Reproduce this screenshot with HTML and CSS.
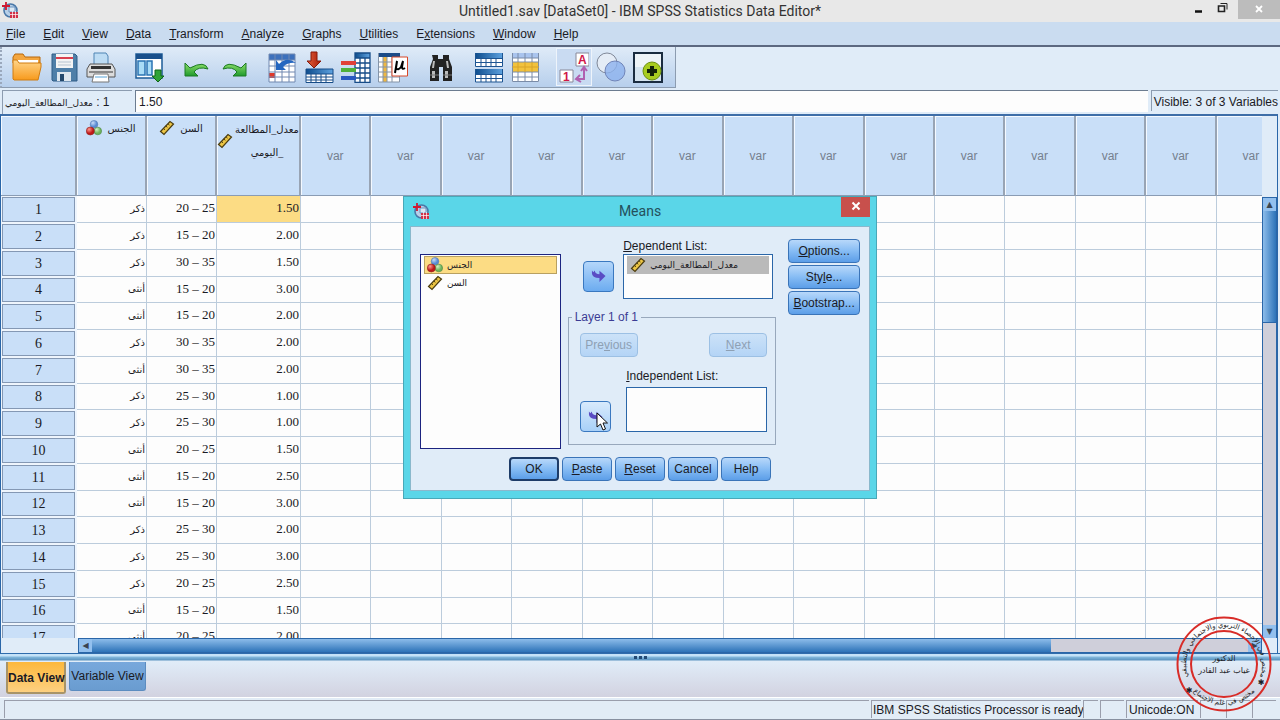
FILE: index.html
```html
<!DOCTYPE html>
<html lang="en">
<head>
    <meta charset="UTF-8">
    <meta name="viewport" content="width=device-width, initial-scale=1.0">
    <title>Untitled1.sav [DataSet0] - IBM SPSS Statistics Data Editor*</title>
    <link rel="stylesheet" href="styles.css">
</head>
<body>
    <!-- shared icons -->
    <svg class="defs" width="0" height="0" aria-hidden="true">
        <defs>
            <linearGradient id="gOrange" x1="0" y1="0" x2="0" y2="1"><stop offset="0" stop-color="#ffd58a"/><stop offset="1" stop-color="#f79a1c"/></linearGradient>
            <linearGradient id="gBlue" x1="0" y1="0" x2="1" y2="0"><stop offset="0" stop-color="#0d4c8c"/><stop offset="1" stop-color="#5fa3e0"/></linearGradient>
            <linearGradient id="gGreen" x1="0" y1="0" x2="0" y2="1"><stop offset="0" stop-color="#8fe06a"/><stop offset="1" stop-color="#1f9a2c"/></linearGradient>
            <linearGradient id="gRed" x1="0" y1="0" x2="1" y2="0"><stop offset="0" stop-color="#e2603c"/><stop offset="1" stop-color="#a81c08"/></linearGradient>
            <radialGradient id="gBallR" cx=".35" cy=".3"><stop offset="0" stop-color="#ff9a90"/><stop offset="1" stop-color="#c01818"/></radialGradient>
            <radialGradient id="gBallG" cx=".35" cy=".3"><stop offset="0" stop-color="#d4f0c4"/><stop offset="1" stop-color="#6fb45c"/></radialGradient>
            <radialGradient id="gBallB" cx=".35" cy=".3"><stop offset="0" stop-color="#c8dcf8"/><stop offset="1" stop-color="#5a8cd4"/></radialGradient>
        </defs>
        <symbol id="app" viewBox="0 0 16 16">
            <circle cx="8.5" cy="8.5" r="6.5" fill="#b8d0e8" stroke="#4a78a8" stroke-width="1.6"/>
            <path d="M7 5h6v5H7z" fill="#dce8f4" stroke="#6a94c0"/>
            <path d="M4 0v8M0 4h8" stroke="#d01830" stroke-width="1.8"/>
            <path d="M8 10h8v6H8z" fill="#d03048"/>
            <path d="M8 12.5h8M10.500 9v7M13.500 9v7" stroke="#fff" stroke-width=".7"/>
        </symbol>
        <symbol id="nominal" viewBox="0 0 16 16">
            <circle cx="8" cy="4.300" r="3.800" fill="url(#gBallB)" stroke="#5478b0" stroke-width=".6"/>
            <circle cx="11.800" cy="11" r="3.800" fill="url(#gBallG)" stroke="#4c8444" stroke-width=".6"/>
            <circle cx="4.300" cy="11" r="4" fill="url(#gBallR)" stroke="#902020" stroke-width=".6"/>
        </symbol>
        <symbol id="scale" viewBox="0 0 16 16">
            <path d="M1.500 11.500 11 1.500l3.500 2.500L5 14.500z" fill="#ecc544" stroke="#4a3c10" stroke-width="1.200"/>
            <path d="M4.500 8.500l1.500 1.300M6.800 6l1.500 1.300M9 3.800l1.500 1.300" stroke="#4a3c10"/>
        </symbol>
        <symbol id="move" viewBox="0 0 16 14">
            <path d="M1 1v3q0 5 8 5v4.500L15.500 7 9 1.500V5Q4.500 5 4 1L2.500 3z" fill="#5a4cc4"/>
        </symbol>
    </svg>

    <header class="titlebar">
        <svg class="app-icon" aria-hidden="true"><use href="#app"/></svg>
        <h1>Untitled1.sav [DataSet0] - IBM SPSS Statistics Data Editor*</h1>
        <div class="window-buttons">
            <button type="button" aria-label="Minimize"><svg width="12" height="12"><path d="M2 9.500h7" stroke="#111" stroke-width="2.500"/></svg></button>
            <button type="button" aria-label="Restore"><svg width="12" height="12" fill="none" stroke="#222"><path d="M1.500 4h6v5.500h-6z" stroke-width="1.600"/><path d="M3.500 1.500h6.500v6"/></svg></button>
            <button type="button" class="close" aria-label="Close"><svg width="10" height="10"><path d="M2 2l6 6M8 2L2 8" stroke="#fff" stroke-width="1.800"/></svg></button>
        </div>
    </header>

    <nav class="menubar">
        <a href="#"><u>F</u>ile</a>
        <a href="#"><u>E</u>dit</a>
        <a href="#"><u>V</u>iew</a>
        <a href="#"><u>D</u>ata</a>
        <a href="#"><u>T</u>ransform</a>
        <a href="#"><u>A</u>nalyze</a>
        <a href="#"><u>G</u>raphs</a>
        <a href="#"><u>U</u>tilities</a>
        <a href="#">E<u>x</u>tensions</a>
        <a href="#"><u>W</u>indow</a>
        <a href="#"><u>H</u>elp</a>
    </nav>

    <div class="toolbar-row">
        <div class="toolbar">
            <div class="group">
                <button type="button" aria-label="Open"><svg viewBox="0 0 30 32"><path d="M1 6l2-3h8l2 3h15v6H1z" fill="#f3a640" stroke="#b8690c"/><path d="M4 9h22v8H4z" fill="#fff"/><path d="M1 28V9h4l2 3h22v4l-3 13H2z" fill="url(#gOrange)" stroke="#d07c10"/></svg></button>
                <button type="button" aria-label="Save"><svg viewBox="0 0 30 32"><path d="M3 3h23l2 2v25H4l-1-1z" fill="#4f7fa8" stroke="#2e5c86"/><path d="M7 3h17v14H7z" fill="#f4f4f4"/><path d="M7 6h17v2H7z" fill="#d84050"/><path d="M9 11h13M9 14h13" stroke="#b8c4d0"/><path d="M8 21h14v9H8z" fill="#dde6ee"/><path d="M11 23h4v7h-4z" fill="#23486c"/></svg></button>
                <button type="button" aria-label="Print"><svg viewBox="0 0 30 32"><path d="M8 2h12l2 3v9H8z" fill="#bddcf4" stroke="#4f84b4"/><path d="M4 13h22l3 5v8H1v-8z" fill="#dcdcdc" stroke="#555"/><path d="M5 15h20v3H5z" fill="#333"/><path d="M3 20h24v2H3z" fill="#888"/><path d="M8 23h14l1 8H6z" fill="#fff" stroke="#777"/><path d="M9 26h12" stroke="#58a4d8"/></svg></button>
            </div>
            <div class="group">
                <button type="button" aria-label="Recall dialog"><svg viewBox="0 0 30 32"><path d="M2 3h26v24H2z" fill="#fff" stroke="#1d5c98" stroke-width="1.500"/><path d="M2 3h26v5H2z" fill="#19508c"/><path d="M4 10h7v14H4zM13 10h5v14h-5z" fill="#a9dcf6" stroke="#2a74b4" stroke-width="1.500"/><path d="M21 19h6v6h3l-6 6-6-6h3z" fill="#2fa336" stroke="#0f6418"/></svg></button>
            </div>
            <div class="group">
                <button type="button" aria-label="Undo"><svg viewBox="0 0 30 32"><path d="M3 12v13h13l-4-4q4-6 14-3Q23 9 8 17z" fill="url(#gGreen)" stroke="#1c7a24"/></svg></button>
                <button type="button" aria-label="Redo"><svg viewBox="0 0 30 32"><path d="M27 12v13H14l4-4q-4-6-14-3Q7 9 22 17z" fill="url(#gGreen)" stroke="#1c7a24"/></svg></button>
            </div>
            <div class="group">
                <button type="button" aria-label="Go to case"><svg viewBox="0 0 30 32"><path d="M2 3h26v28H2z" fill="#fff"/><path d="M2 3h26v6H2z" fill="#3c70bc"/><path d="M2 22h6v5H2z" fill="#e03828"/><path d="M2 3h26v28H2zM2 9h26M2 15h26M2 21h26M2 26h26M8 3v28M15 3v28M22 3v28" fill="none" stroke="#7088b0"/><path d="M9 9v10h10l-3-3q5-5 13-4Q20 5 12 13z" fill="#2466c0"/></svg></button>
                <button type="button" aria-label="Go to variable"><svg viewBox="0 0 30 32"><path d="M2 18h27v14H2z" fill="#fff"/><path d="M2 18h27v5H2z" fill="url(#gBlue)"/><path d="M2 18h27v13.500H2zM2 23h27M2 26h27M2 29h27M7 23v9M12 23v9M17 23v9M22 23v9" fill="none" stroke="#164c88"/><path d="M7 1h6v9h4l-7 7-7-7h4z" fill="url(#gRed)" stroke="#861808"/></svg></button>
                <button type="button" aria-label="Variables"><svg viewBox="0 0 30 32"><path d="M14 2h15v30H14z" fill="#fff"/><path d="M14 2h15v5H14z" fill="url(#gBlue)"/><path d="M14 2h15v29.500H14zM14 7h15M14 12h15M14 17h15M14 22h15M14 27h15M19 7v25M24 7v25" fill="none" stroke="#164c88" stroke-width="1.300"/><path d="M0 10h15v4H0z" fill="#e04038"/><path d="M0 17h15v4H0z" fill="#4fb03c"/><path d="M0 25h15v4H0z" fill="#2858c0"/></svg></button>
                <button type="button" aria-label="Run descriptive statistics"><svg viewBox="0 0 30 32"><path d="M0 2h22v29H0z" fill="#fff"/><path d="M5 6h4v25H5z" fill="#f0b840"/><path d="M0 2h22v4H0z" fill="#1c4c88"/><path d="M.500 2v29h21V6M0 11h22M0 16h22M0 21h22M0 26h22M5 6v25M9 6v25M14 6v25" fill="none" stroke="#8494a8"/><path d="M14 6h15.500v19H14z" fill="#fff" stroke="#d84828"/><path d="M19 10l-2 12M19 10l-1 7q2 3 5-1l2-6-1 6q0 3 3 1" fill="none" stroke="#000" stroke-width="2"/></svg></button>
            </div>
            <div class="group">
                <button type="button" aria-label="Find"><svg viewBox="0 0 30 32"><path d="M6 4h6v4h5V4h6v4l3 8v14h-9V16h-4v14H4V16l3-8z" fill="#222"/><path d="M7 10l-1 7h2l1-7zM20 10l1 7h2l-1-7zM6 20h3v7H6zM19 20h3v7h-3z" fill="#bbb"/><path d="M4 24h9M17 24h9" stroke="#777"/></svg></button>
            </div>
            <div class="group">
                <button type="button" aria-label="Insert cases"><svg viewBox="0 0 30 32"><path d="M1 2h28v14H1zM1 18h28v13H1z" fill="#fff"/><path d="M1 2h28v5H1zM1 18h28v5H1z" fill="url(#gBlue)"/><path d="M1.500 2v13.500h27V2M1.500 18v13h27V18M1 7.500h28M1 11.500h28M1 23.500h28M1 27.500h28M7 7v8M12 7v8M17 7v8M22 7v8M7 23v8M12 23v8M17 23v8M22 23v8" fill="none" stroke="#1c5492"/></svg></button>
                <button type="button" aria-label="Insert variable"><svg viewBox="0 0 30 32"><path d="M1 2h27v29H1z" fill="#fff"/><path d="M1 2h27v5H1z" fill="#a9c4ee"/><path d="M1 11h27v10H1z" fill="#f2c23c"/><path d="M1.500 2v28.500h26V2M1 7h27M1 11h27M1 21h27M1 26h27M7 2v9M14 2v9M21 2v9M7 21v10M14 21v10M21 21v10" fill="none" stroke="#7a8ca8"/><path d="M1 16h27M7 11v10M14 11v10M21 11v10" stroke="#d8a428"/></svg></button>
            </div>
            <div class="group">
                <button type="button" class="pressed" aria-label="Value labels"><svg viewBox="0 0 30 32"><path d="M17 2h13v13H17z" fill="#fff" stroke="#889"/><path d="M1 19h13v12H1z" fill="#fff" stroke="#889"/><text x="19" y="13" class="glyph">A</text><text x="4" y="30" class="glyph">1</text><path d="M17 28h8V17m-3 3 3-4 3 4M21 24l-4 4 5 3" fill="none" stroke="#b060b0" stroke-width="2"/></svg></button>
                <button type="button" aria-label="Use variable sets"><svg viewBox="0 0 30 32"><circle cx="11" cy="12" r="10" fill="#e4ecf6" stroke="#808898"/><circle cx="19" cy="20" r="10" fill="#8cb2ee" fill-opacity=".8" stroke="#7084b8"/></svg></button>
                <button type="button" aria-label="Customize toolbar"><svg viewBox="0 0 30 32"><path d="M1 2h28v29H1z" fill="#d5e4f0" stroke="#1a2c40" stroke-width="2"/><path d="M2 3h26v13H2z" fill="#eef4f8"/><circle cx="19" cy="20" r="9" fill="#a8cc20" stroke="#6c9010"/><path d="M19 15v10M14 20h10" stroke="#15240a" stroke-width="4"/></svg></button>
            </div>
        </div>
    </div>

    <div class="cell-editor">
        <label class="cell-name" for="cell-value"><bdi>معدل_المطالعة_اليومي</bdi> : 1</label>
        <input type="text" id="cell-value" value="1.50">
        <div class="visible">Visible: 3 of 3 Variables</div>
    </div>

    <main class="sheet">
        <div class="table-area">
            <table>
                <colgroup>
                    <col class="col-case"><col class="col-sex"><col class="col-age"><col class="col-rate"><col span="14">
                </colgroup>
                <thead>
                    <tr id="head-row">
                        <th></th>
                        <th><div class="var-name"><svg class="measure"><use href="#nominal"/></svg><span>الجنس</span></div></th>
                        <th><div class="var-name"><svg class="measure"><use href="#scale"/></svg><span>السن</span></div></th>
                        <th><div class="var-name long"><svg class="measure"><use href="#scale"/></svg><span dir="rtl">معدل_المطالعة<br>_اليومي</span></div></th>
                    </tr>
                </thead>
                <tbody id="cases"></tbody>
            </table>
        </div>
        <div class="vscroll">
            <button type="button" aria-label="Scroll up">▲</button>
            <div class="track"><div class="thumb"></div></div>
            <button type="button" aria-label="Scroll down">▼</button>
        </div>
        <div class="hscroll">
            <button type="button" aria-label="Scroll left">◀</button>
            <div class="track"><div class="thumb"></div></div>
            <button type="button" aria-label="Scroll right">▶</button>
        </div>
    </main>
    <div class="splitter"><i></i><i></i><i></i></div>

    <div class="view-tabs">
        <button type="button" class="active">Data View</button>
        <button type="button">Variable View</button>
    </div>

    <footer class="statusbar">
        <div class="message"></div>
        <div class="processor">IBM SPSS Statistics Processor is ready</div>
        <div class="narrow"></div>
        <div class="small"></div>
        <div class="unicode">Unicode:ON</div>
        <div class="small"></div>
        <div class="small"></div>
        <div class="small"></div>
    </footer>

    <section class="dialog" role="dialog" aria-labelledby="dialog-title">
        <div class="dialog-title">
            <svg class="app-icon" aria-hidden="true"><use href="#app"/></svg>
            <h2 id="dialog-title">Means</h2>
            <button type="button" class="dialog-close" aria-label="Close"><svg width="10" height="10"><path d="M1.500 1.500l7 7M8.500 1.500l-7 7" stroke="#fff" stroke-width="2"/></svg></button>
        </div>
        <form class="dialog-body">
            <div class="panes">
                <ul class="list source" role="listbox" aria-label="Variables">
                    <li class="selected" role="option"><svg class="measure"><use href="#nominal"/></svg><span>الجنس</span></li>
                    <li role="option"><svg class="measure"><use href="#scale"/></svg><span>السن</span></li>
                </ul>
                <div class="targets">
                    <div class="dependent">
                        <button type="button" class="move" aria-label="Move to Dependent List"><svg><use href="#move"/></svg></button>
                        <div class="field">
                            <div class="field-label" id="dep-label"><u>D</u>ependent List:</div>
                            <ul class="list target" role="listbox" aria-labelledby="dep-label">
                                <li class="chosen" role="option"><svg class="measure"><use href="#scale"/></svg><span>معدل_المطالعة_اليومي</span></li>
                            </ul>
                        </div>
                    </div>
                    <fieldset>
                        <legend>Layer 1 of 1</legend>
                        <div class="layer-nav">
                            <button type="button" class="btn" disabled>Pre<u>v</u>ious</button>
                            <button type="button" class="btn" disabled><u>N</u>ext</button>
                        </div>
                        <div class="independent">
                            <button type="button" class="move hover" aria-label="Move to Independent List"><svg><use href="#move"/></svg></button>
                            <div class="field">
                                <div class="field-label" id="ind-label"><u>I</u>ndependent List:</div>
                                <ul class="list target" role="listbox" aria-labelledby="ind-label"></ul>
                            </div>
                        </div>
                    </fieldset>
                </div>
                <div class="side-buttons">
                    <button type="button" class="btn"><u>O</u>ptions...</button>
                    <button type="button" class="btn">Sty<u>l</u>e...</button>
                    <button type="button" class="btn"><u>B</u>ootstrap...</button>
                </div>
            </div>
            <div class="actions">
                <button type="button" class="btn default">OK</button>
                <button type="button" class="btn"><u>P</u>aste</button>
                <button type="button" class="btn"><u>R</u>eset</button>
                <button type="button" class="btn">Cancel</button>
                <button type="button" class="btn">Help</button>
            </div>
        </form>
    </section>

    <svg class="cursor" viewBox="0 0 12 19" aria-hidden="true"><path d="M1 1v14l3.500-3 2.500 6 2.500-1L7 11h4.500z" fill="#fff" stroke="#111"/></svg>

    <svg class="stamp" viewBox="0 0 96 96">
        <circle cx="48" cy="48" r="46.500"/>
        <circle cx="48" cy="48" r="33"/>
        <path id="arc-top" d="M14 66A38 38 0 1 1 82 66"/>
        <path id="arc-bottom" d="M17 75A42 42 0 0 0 79 75"/>
        <text><textPath href="#arc-top" startOffset="50%">مختص في الإحصاء التربوي والاجتماعي والتطبيقي</textPath></text>
        <text><textPath href="#arc-bottom" startOffset="50%">مختص في علم الاجتماع</textPath></text>
        <text class="star" x="13" y="77">✱</text>
        <text class="star" x="85" y="69">✱</text>
        <text class="name" x="48" y="45">الدكتور</text>
        <text class="name" x="48" y="57">غياب عبد القادر</text>
    </svg>

    <script src="script.js"></script>
</body>
</html>
```
FILE: script.js
```js
const cases = [
    ["ذكر", "20 – 25", "1.50"],
    ["ذكر", "15 – 20", "2.00"],
    ["ذكر", "30 – 35", "1.50"],
    ["أنثى", "15 – 20", "3.00"],
    ["أنثى", "15 – 20", "2.00"],
    ["ذكر", "30 – 35", "2.00"],
    ["أنثى", "30 – 35", "2.00"],
    ["ذكر", "25 – 30", "1.00"],
    ["ذكر", "25 – 30", "1.00"],
    ["أنثى", "20 – 25", "1.50"],
    ["أنثى", "15 – 20", "2.50"],
    ["أنثى", "15 – 20", "3.00"],
    ["ذكر", "25 – 30", "2.00"],
    ["ذكر", "25 – 30", "3.00"],
    ["ذكر", "20 – 25", "2.50"],
    ["أنثى", "15 – 20", "1.50"],
    ["أنثى", "20 – 25", "2.00"]
];
const emptyColumns = 14;

// unused variables
const headRow = document.getElementById("head-row");
for (let i = 0; i < emptyColumns; i++) {
    const th = document.createElement("th");
    th.className = "unused";
    th.textContent = "var";
    headRow.appendChild(th);
}

// case rows
const body = document.getElementById("cases");
cases.forEach((values, index) => {
    const row = body.insertRow();
    const number = document.createElement("th");
    number.textContent = index + 1;
    row.appendChild(number);
    values.forEach(value => {
        row.insertCell().textContent = value;
    });
    row.cells[1].className = "sex";
    for (let i = 0; i < emptyColumns; i++) {
        row.insertCell();
    }
});
body.rows[0].cells[3].className = "current";
```
FILE: styles.css
```css
* {
    box-sizing: border-box;
}
body {
    margin: 0;
    height: 100vh;
    display: flex;
    flex-direction: column;
    overflow: hidden;
    background: #e0ecf8;
    font-family: "Liberation Sans", "DejaVu Sans", sans-serif;
    font-size: 12px;
    color: #1a1a24;
}
button, input {
    font: inherit;
    color: inherit;
    margin: 0;
}
.defs {
    position: absolute;
}
.app-icon {
    width: 16px;
    height: 16px;
}
.measure {
    width: 16px;
    height: 16px;
    flex: none;
}

/* title and menu */
.titlebar {
    height: 22px;
    flex: none;
    display: grid;
    grid-template-columns: 1fr auto 1fr;
    background: #e8e8e8;
}
.titlebar .app-icon {
    margin: 2px;
}
.titlebar h1 {
    margin: 0;
    font: 14px/23px Roboto, "Noto Sans", sans-serif;
    color: #333;
}
.window-buttons {
    display: flex;
    justify-content: flex-end;
}
.window-buttons button {
    width: 24px;
    height: 19px;
    padding: 0;
    border: none;
    background: none;
}
.window-buttons .close {
    width: 42px;
    margin-left: 3px;
    background: #bcbcbc;
}
.menubar {
    height: 25px;
    flex: none;
    display: flex;
    gap: 18px;
    padding: 0 6px;
    line-height: 24px;
    background: #cadcf0;
    border-bottom: 2px solid #5c6880;
}
.menubar a {
    color: inherit;
    text-decoration: none;
}

/* toolbar */
.toolbar-row {
    height: 43px;
    flex: none;
    display: flex;
    align-items: flex-start;
}
.toolbar {
    display: flex;
    gap: 18px;
    height: 41px;
    padding: 4px 12px 0 10px;
    border-left: 2px dotted #9aa8bc;
    border-right: 1px solid #8c9cb0;
    border-bottom: 1px solid #8c9cb0;
    background: linear-gradient(#dfebf8, #b7cfec);
}
.group {
    display: flex;
    gap: 7px;
}
.group button {
    width: 30px;
    height: 32px;
    padding: 0;
    border: none;
    background: none;
}
.group .pressed {
    box-shadow: 0 0 0 2px #c9dbf2, 0 0 0 3px #eef4fb;
    background: #c9dbf2;
}
.group svg {
    display: block;
    width: 30px;
    height: 32px;
}
.glyph {
    font: bold 12px "Liberation Sans", sans-serif;
    fill: #d01848;
}

/* cell editor */
.cell-editor {
    height: 24px;
    flex: none;
    display: flex;
    gap: 3px;
    padding: 0 2px;
    line-height: 22px;
}
.cell-name {
    width: 130px;
    padding-left: 2px;
    white-space: nowrap;
    border: 1px solid #8c9cb0;
    border-width: 1px 0 0 1px;
}
.cell-name bdi {
    font-size: 9px;
}
.cell-editor input {
    flex: 1;
    height: 22px;
    padding: 0 3px;
    background: #fdfdfd;
    border: 1px solid #6c7c90;
    border-width: 1px 0 0 1px;
}
.visible {
    height: 21px;
    padding-left: 2px;
    border: 1px solid #8c9cb0;
    border-width: 1px 0 0 1px;
}

/* data sheet */
.sheet {
    flex: 1;
    min-height: 0;
    display: grid;
    grid-template-columns: 77px 1fr 15px;
    grid-template-rows: 81px 1fr 15px;
    margin-right: 2px;
    border: 1px solid #2a66a8;
    border-top: 2px solid #3e6ea8;
    border-bottom: none;
}
.table-area {
    grid-column: 1 / 3;
    grid-row: 1 / 3;
    overflow: hidden;
}
table {
    width: 102%;
    table-layout: fixed;
    border-collapse: separate;
    border-spacing: 0;
    font-family: "Liberation Serif", "DejaVu Sans", serif;
    font-size: 13px;
}
.col-case {
    width: 76px;
}
.col-sex {
    width: 70px;
}
.col-age {
    width: 70px;
}
.col-rate {
    width: 84px;
}
th {
    padding: 0;
    font-weight: normal;
    background: #c9dff8;
}
thead th {
    height: 80px;
    vertical-align: top;
    border-right: 2px solid #98a4b4;
    border-bottom: 1px solid #8a9cb4;
    box-shadow: inset 1px 1px #f4f9ff;
}
tbody tr {
    height: 27px;
}
tbody tr:nth-child(4n) {
    height: 26px;
}
tbody th {
    font-size: 14px;
    border: 1px solid #eef5fd;
    border-right-width: 2px;
    box-shadow: inset 0 0 0 1px #8498b4;
}
td {
    padding: 0 1px 2px;
    text-align: right;
    white-space: nowrap;
    background: #fdfdfd;
    border: 1px solid #bcccdc;
    border-width: 0 1px 1px 0;
}
td.sex {
    font-family: "DejaVu Sans", sans-serif;
    font-size: 10px;
}
td.current {
    background: #fcdc84;
}
thead .unused {
    vertical-align: middle;
    font-family: "Liberation Sans", sans-serif;
    font-size: 12px;
    color: #75808e;
}
.var-name {
    display: flex;
    justify-content: center;
    gap: 5px;
    padding-top: 4px;
    font-size: 10px;
    line-height: 18px;
}
.var-name.long {
    align-items: center;
    line-height: 23px;
    padding-top: 2px;
    gap: 2px;
}

/* scroll bars */
.vscroll {
    grid-column: 3;
    grid-row: 2;
    display: flex;
    flex-direction: column;
    border: 1px solid #2a66a8;
    border-width: 1px 1px 0 1px;
}
.hscroll {
    grid-column: 2;
    grid-row: 3;
    display: flex;
    border: 1px solid #2a66a8;
}
.vscroll button, .hscroll button {
    width: 13px;
    height: 13px;
    padding: 0;
    border: none;
    background: #93c0ee;
    color: #3a4450;
    font: 8px/13px "DejaVu Sans", sans-serif;
}
.track {
    flex: 1;
    background: #cfcfda;
}
.vscroll .thumb {
    width: 100%;
    height: 27%;
    background: linear-gradient(90deg, #8cbcea, #2d73b8);
    border-bottom: 1px solid #2a66a8;
}
.hscroll .thumb {
    width: 83%;
    height: 100%;
    background: linear-gradient(#8cbcea, #2d73b8);
}
.splitter {
    height: 9px;
    flex: none;
    display: flex;
    justify-content: center;
    align-items: center;
    gap: 2px;
    background: linear-gradient(#2f6cac 0 1px, #c4e2f8 1px 3px, #82b8dc 4px, #5c94c0 7px, #e0ecf8 8px);
}
.splitter i {
    width: 3px;
    height: 3px;
    background: #234a74;
}

/* view tabs */
.view-tabs {
    height: 35px;
    flex: none;
    display: flex;
    align-items: flex-start;
    gap: 3px;
    padding-left: 6px;
    background: linear-gradient(#e0ecf8, #d2d2e0);
}
.view-tabs button {
    width: 77px;
    height: 29px;
    padding: 0;
    border: 1px solid #5c8cc0;
    border-top: none;
    border-radius: 0 0 3px 3px;
    background: linear-gradient(#78a8dc, #6a9cd0);
    white-space: nowrap;
}
.view-tabs .active {
    width: 60px;
    height: 32px;
    padding-top: 2px;
    border: 2px solid #a89468;
    border-top: none;
    background: linear-gradient(#fcb83c, #fdd080);
    font-weight: bold;
}

/* status bar */
.statusbar {
    height: 23px;
    flex: none;
    display: flex;
    gap: 2px;
    padding: 2px 4px 1px;
    line-height: 19px;
    white-space: nowrap;
    border-top: 1px solid #fff;
    border-bottom: 1px solid #8890a0;
    background: #e2ecf6;
}
.statusbar div {
    flex: none;
    padding-left: 2px;
    border: 1px solid #9a9eac;
    border-width: 1px 0 0 1px;
}
.statusbar .message {
    flex: 1;
}
.statusbar .processor {
    width: 210px;
    padding-left: 1px;
}
.unicode {
    width: 72px;
}
.narrow {
    width: 15px;
}
.small {
    width: 24px;
}

/* Means dialog */
.dialog {
    position: absolute;
    left: 403px;
    top: 196px;
    width: 474px;
    padding: 0 6px 7px;
    background: #5ad6e8;
    border: 1px solid #48a8b8;
}
.dialog-title {
    height: 29px;
    display: grid;
    grid-template-columns: 1fr auto 1fr;
}
.dialog-title .app-icon {
    margin: 6px 3px;
}
.dialog-title h2 {
    margin: 0;
    font: 14px/29px Roboto, "Noto Sans", sans-serif;
    color: #24505c;
}
.dialog-close {
    justify-self: end;
    width: 29px;
    height: 20px;
    padding: 0;
    border: none;
    background: #c8504c;
}
.dialog-body {
    padding: 12px 9px 9px;
    background: #e0ecf8;
    border: 1px solid #8ab8cc;
}
.panes {
    display: flex;
    align-items: flex-start;
}
.list {
    margin: 0;
    padding: 1px 3px;
    list-style: none;
    font-size: 9px;
    background: #fdfdfd;
    border: 1px solid #2a66a8;
}
.list li {
    height: 18px;
    display: flex;
    align-items: center;
    gap: 4px;
    padding-left: 3px;
    white-space: nowrap;
}
.list .selected {
    background: #fcdc84;
    border: 1px solid #b8a060;
    padding-left: 2px;
}
.list .chosen {
    background: #bababa;
}
.source {
    width: 141px;
    height: 195px;
    margin-top: 15px;
    border-color: #1c2480;
}
.targets {
    width: 209px;
    margin-left: 7px;
}
.dependent {
    display: flex;
    align-items: center;
    justify-content: flex-end;
    gap: 9px;
    padding-right: 3px;
}
.dependent .field {
    width: 150px;
}
.dependent .move {
    margin-top: 14px;
}
.field-label {
    line-height: 15px;
    white-space: nowrap;
}
.target {
    height: 45px;
}
.move {
    width: 31px;
    height: 31px;
    padding: 0;
    border: 1px solid #3a78c0;
    border-radius: 4px;
    background: linear-gradient(#b4d6fa, #6cacf0);
}
.move.hover {
    background: linear-gradient(#d8eafc, #a8d0f8);
}
.move svg {
    display: block;
    width: 15px;
    height: 14px;
    margin: auto;
}
fieldset {
    margin: 11px 0 0;
    min-width: 0;
    padding: 8px 8px 12px 11px;
    border: 1px solid #98a8bc;
}
legend {
    padding: 0 3px;
    margin-left: -8px;
    line-height: 15px;
    color: #3c3c94;
}
.layer-nav {
    display: flex;
    justify-content: space-between;
    margin-bottom: 12px;
}
.independent {
    display: flex;
    align-items: flex-end;
    justify-content: space-between;
}
.independent .field {
    width: 141px;
}
.independent .field-label {
    margin-bottom: 3px;
}
.btn {
    height: 24px;
    min-width: 50px;
    padding: 0;
    border: 1px solid #3a74b8;
    border-radius: 4px;
    background: linear-gradient(#b8d8fa, #86bcf4 50%, #5c9ee8);
}
.btn:disabled {
    width: 58px;
    border-color: #9cc0e4;
    background: linear-gradient(#cce2f8, #b4d4f6);
    color: #8ea0b4;
}
.btn.default {
    border: 2px solid #1e3c68;
}
.side-buttons {
    display: flex;
    flex-direction: column;
    gap: 2px;
    width: 72px;
    margin-left: 12px;
}
.actions {
    display: flex;
    justify-content: center;
    gap: 3px;
    margin-top: 8px;
}
.cursor {
    position: absolute;
    left: 596px;
    top: 412px;
    width: 12px;
    height: 19px;
}

/* stamp over the corner */
.stamp {
    position: absolute;
    right: 8px;
    bottom: 8px;
    width: 96px;
    height: 96px;
    fill: none;
}
.stamp circle {
    stroke: #d82c28;
    stroke-width: 2px;
}
.stamp text {
    font: 7px "DejaVu Sans", sans-serif;
    fill: #1c1c24;
    text-anchor: middle;
}
.stamp .star {
    font-size: 8px;
}
.stamp .name {
    font-size: 8px;
}
```
